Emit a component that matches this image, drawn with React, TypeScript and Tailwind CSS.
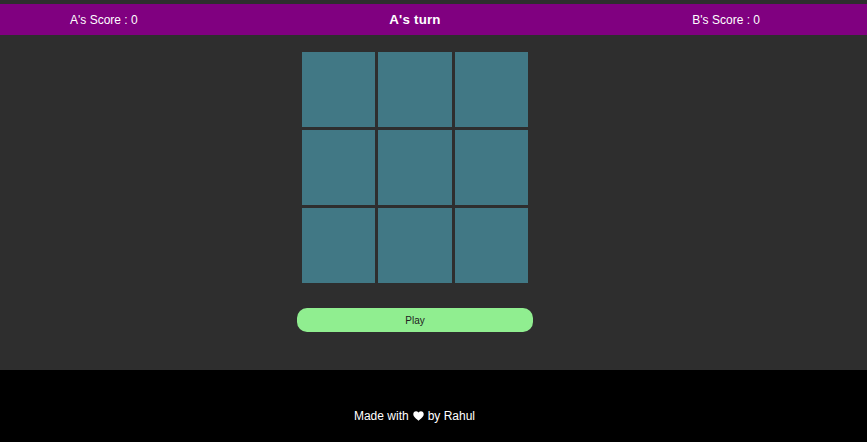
const cells = Array.from({ length: 9 });

export default function App() {
  return (
    <div
      className="w-[867px] h-[442px] bg-[#2e2e2e] flex flex-col pt-[4px]"
      style={{ fontFamily: '"Liberation Sans", Arial, sans-serif' }}
    >
      <header className="h-[31px] bg-[#800080] text-white text-[12px] flex items-center justify-between pl-[70px] pr-[107px]">
        <span>A's Score : 0</span>
        <span className="text-[13.33px] font-black tracking-[0.2px]">A's turn</span>
        <span>B's Score : 0</span>
      </header>

      <main className="flex-1 flex flex-col items-center pr-[37px] pt-[17px]">
        <div className="grid grid-cols-[73.5px_73.5px_73.5px] gap-x-[3px] gap-y-[3px]">
          {cells.map((_, i) => (
            <div key={i} className="h-[75px] bg-[#417885]" />
          ))}
        </div>
        <button className="mt-[25px] w-[236px] h-[24px] rounded-[10px] bg-[#90ee90] text-[10px] text-[#222]">
          Play
        </button>
      </main>

      <footer className="h-[72px] bg-black text-white text-[12px] flex justify-center pt-[40px] pr-[38px]">
        <span className="flex items-center gap-[4px] h-[12px]">
          Made with
          <svg width="11" height="10" viewBox="0 0 24 22" fill="white">
            <path d="M12 21.5 10.3 20C4.2 14.5 0.5 11.1 0.5 6.9 0.5 3.4 3.2 0.8 6.6 0.8c1.9 0 3.8 0.9 5.4 2.4C13.6 1.7 15.5 0.8 17.4 0.8c3.4 0 6.1 2.6 6.1 6.1 0 4.2-3.7 7.6-9.8 13.1L12 21.5z" />
          </svg>
          by Rahul
        </span>
      </footer>
    </div>
  );
}
